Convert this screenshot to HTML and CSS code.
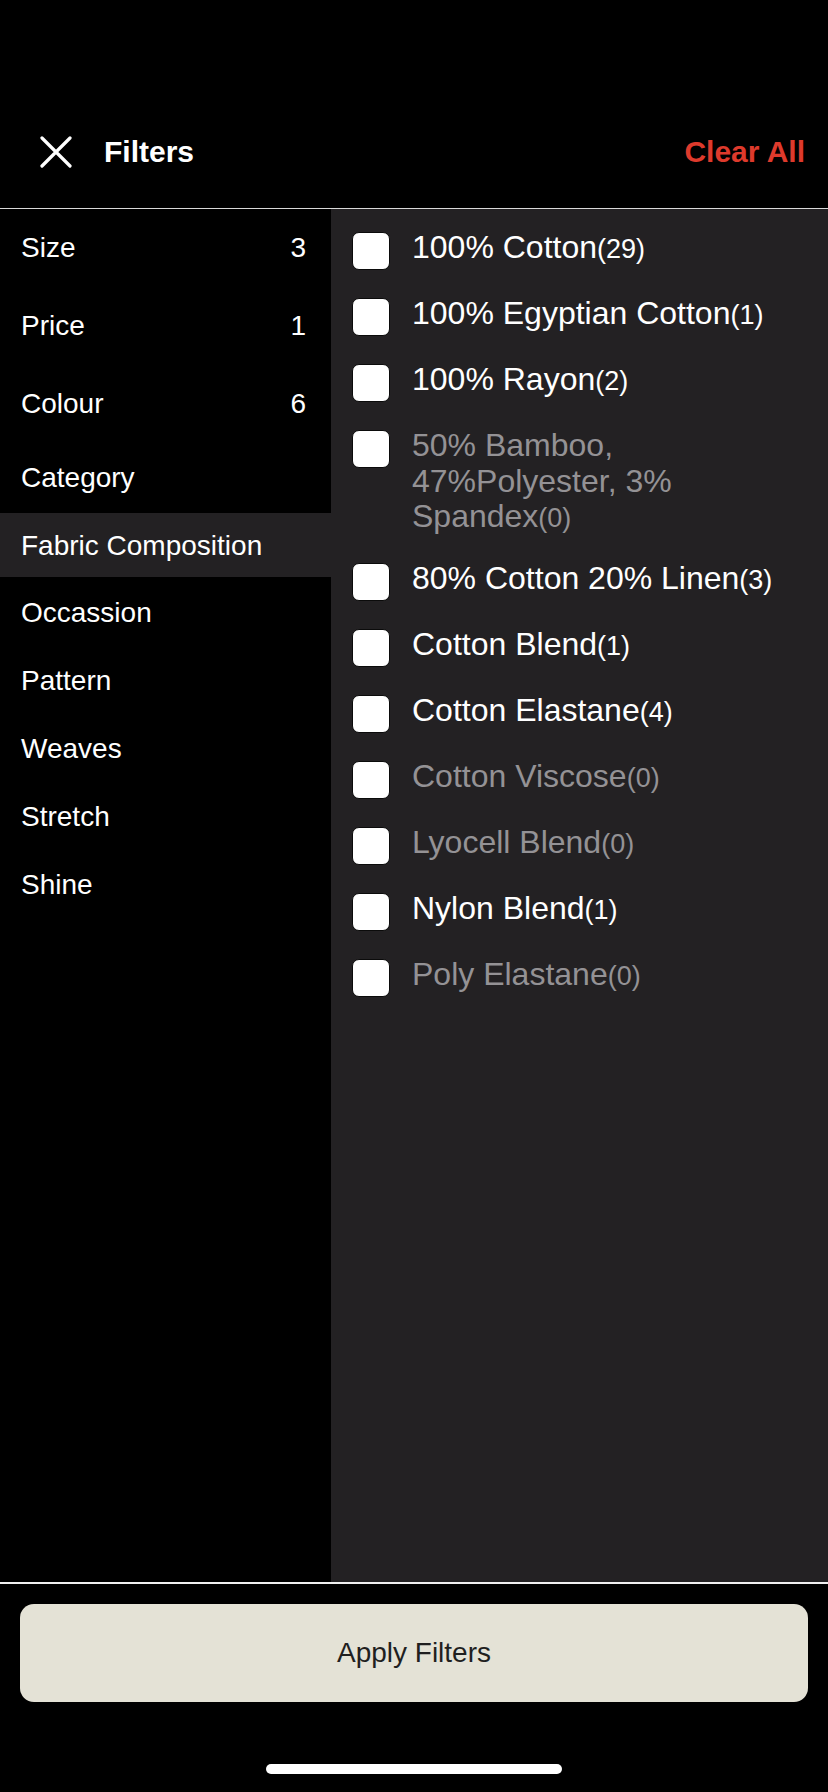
FILE: index.html
```html
<!DOCTYPE html>
<html lang="en">
<head>
<meta charset="utf-8">
<title>Filters</title>
<link rel="stylesheet" href="styles.css">
</head>
<body>
<div class="app">
  <header class="header">
    <button class="close" aria-label="Close">
      <svg width="32" height="32" viewBox="0 0 32 32"><path d="M2 2 L30 30 M30 2 L2 30" stroke="#fff" stroke-width="3.2" stroke-linecap="round" fill="none"/></svg>
    </button>
    <h1 class="title">Filters</h1>
    <span class="clear">Clear All</span>
  </header>
  <div class="divider"></div>
  <main class="main">
    <nav class="cats">
      <div class="cat tall"><span>Size</span><span class="num">3</span></div>
      <div class="cat tall"><span>Price</span><span class="num">1</span></div>
      <div class="cat tall"><span>Colour</span><span class="num">6</span></div>
      <div class="cat mid"><span>Category</span></div>
      <div class="cat active"><span>Fabric Composition</span></div>
      <div class="cat"><span>Occassion</span></div>
      <div class="cat"><span>Pattern</span></div>
      <div class="cat"><span>Weaves</span></div>
      <div class="cat"><span>Stretch</span></div>
      <div class="cat"><span>Shine</span></div>
    </nav>
    <section class="opts">
      <label class="opt"><span class="box"></span><span class="txt">100% Cotton<span class="cnt">(29)</span></span></label>
      <label class="opt"><span class="box"></span><span class="txt">100% Egyptian Cotton<span class="cnt">(1)</span></span></label>
      <label class="opt"><span class="box"></span><span class="txt">100% Rayon<span class="cnt">(2)</span></span></label>
      <label class="opt off"><span class="box"></span><span class="txt">50% Bamboo, 47%Polyester, 3% Spandex<span class="cnt">(0)</span></span></label>
      <label class="opt"><span class="box"></span><span class="txt">80% Cotton 20% Linen<span class="cnt">(3)</span></span></label>
      <label class="opt"><span class="box"></span><span class="txt">Cotton Blend<span class="cnt">(1)</span></span></label>
      <label class="opt"><span class="box"></span><span class="txt">Cotton Elastane<span class="cnt">(4)</span></span></label>
      <label class="opt off"><span class="box"></span><span class="txt">Cotton Viscose<span class="cnt">(0)</span></span></label>
      <label class="opt off"><span class="box"></span><span class="txt">Lyocell Blend<span class="cnt">(0)</span></span></label>
      <label class="opt"><span class="box"></span><span class="txt">Nylon Blend<span class="cnt">(1)</span></span></label>
      <label class="opt off"><span class="box"></span><span class="txt">Poly Elastane<span class="cnt">(0)</span></span></label>
    </section>
  </main>
  <div class="divider thick"></div>
  <footer class="footer">
    <button class="apply">Apply Filters</button>
    <div class="home"></div>
  </footer>
</div>
</body>
</html>
```
FILE: styles.css
```css
* { box-sizing: border-box; }
html, body {
  margin: 0;
  padding: 0;
  background: #000;
}
body {
  font-family: "Liberation Sans", Arial, sans-serif;
  color: #fff;
}
.app {
  width: 828px;
  height: 1792px;
  display: flex;
  flex-direction: column;
  background: #000;
}
.header {
  height: 208px;
  padding: 96px 23px 0 40px;
  display: flex;
  align-items: center;
}
.close {
  width: 32px;
  height: 32px;
  padding: 0;
  border: 0;
  background: none;
  display: flex;
}
.title {
  margin: 0 0 0 32px;
  font-size: 30px;
  font-weight: 700;
  flex: 1;
}
.clear {
  font-size: 30px;
  font-weight: 700;
  color: #de3a2c;
}
.divider {
  height: 1px;
  background: #d9d9d9;
  flex: none;
}
.divider.thick {
  height: 2px;
  background: #f0f0f0;
}
.main {
  height: 1373px;
  display: flex;
  flex: none;
}
.cats {
  width: 331px;
  flex: none;
  background: #000;
}
.cat {
  height: 68px;
  display: flex;
  align-items: center;
  justify-content: space-between;
  padding: 0 25px 0 21px;
  font-size: 28px;
}
.cat.tall { height: 78px; }
.cat.mid { height: 70px; }
.cat.active {
  height: 64px;
  margin-bottom: 2px;
  padding-top: 2px;
  background: #232123;
}
.opts {
  flex: 1;
  background: #232123;
  padding: 21px 30px 0 21px;
  display: flex;
  flex-direction: column;
  gap: 26px;
}
.opt {
  display: flex;
  align-items: flex-start;
  gap: 22px;
}
.box {
  width: 38px;
  height: 38px;
  margin-top: 2px;
  flex: none;
  background: #fff;
  border: 1.5px solid #0b0b0b;
  border-radius: 7px;
}
.txt {
  font-size: 32px;
  line-height: 35.5px;
  color: #fff;
}
.cnt {
  font-size: 27px;
  line-height: 1;
}
.opt.off .txt { color: #949295; }
.footer {
  flex: 1;
  padding: 20px 20px 0;
  display: flex;
  flex-direction: column;
  align-items: center;
}
.apply {
  width: 788px;
  height: 98px;
  border: 0;
  border-radius: 14px;
  background: #e4e2d6;
  color: #1f1f1f;
  font-family: "Liberation Sans", Arial, sans-serif;
  font-size: 28px;
}
.home {
  width: 296px;
  height: 10px;
  border-radius: 5px;
  background: #fff;
  margin-top: 62px;
}
```
